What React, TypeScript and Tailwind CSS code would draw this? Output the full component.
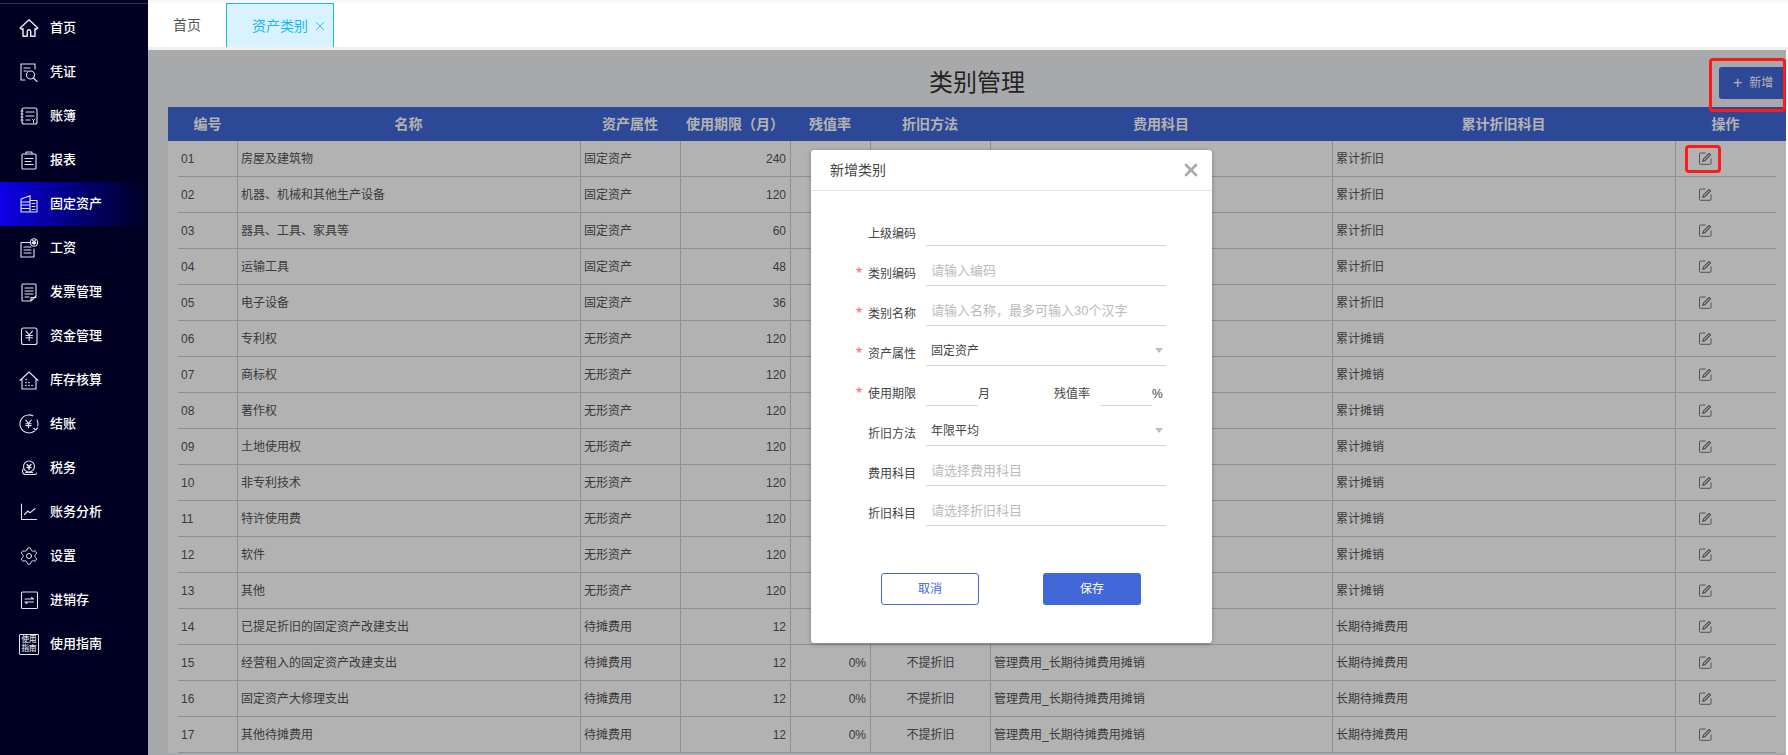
import React from "react";
import { Settings, X } from "lucide-react";

const S = (p: { children: React.ReactNode }) => (
  <svg width="20" height="20" viewBox="0 0 20 20" fill="none" stroke="#e4e4ee" strokeWidth="1.1" strokeLinecap="round" strokeLinejoin="round" className="shrink-0">
    {p.children}
  </svg>
);
const Yen = ({ x = 10, y = 10, s = 1 }: { x?: number; y?: number; s?: number }) => (
  <path d={`M${x - 3 * s} ${y - 4 * s}L${x} ${y - 0.5 * s}L${x + 3 * s} ${y - 4 * s}M${x} ${y - 0.5 * s}V${y + 4.5 * s}M${x - 3 * s} ${y}H${x + 3 * s}M${x - 3 * s} ${y + 2 * s}H${x + 3 * s}`} />
);

const icons: Record<string, React.ReactNode> = {
  首页: <S><path strokeWidth="1.5" d="M10 1.8L1.2 10l1.6 1.5 1.2-1V18.2h4.3v-4.7a1.7 1.7 0 0 1 3.4 0v4.7H16v-7.7l1.2 1 1.6-1.5z" /></S>,
  凭证: <S><path d="M16 7V2H2v16h4M5 6h6M5 9h3" /><circle cx="11.5" cy="13" r="4" /><path d="M14.5 16l3.5 3.5" /></S>,
  账簿: <S><rect x="3" y="2" width="15" height="16" rx="2" /><path d="M2 5h2M2 8h2M2 11h2M2 14h2M7 6h8M7 10h8M7 14h4" /><path strokeWidth="0.9" d="M13 13l1.5 1.5L16 13M14.5 14.5V17" /></S>,
  报表: <S><rect x="3" y="4" width="14" height="15" rx="1" /><path d="M7 4V2h6v2M6 8.5h8M6 11.5h6M6 14.5h8" /></S>,
  固定资产: <S><path d="M2 5l9-3.2V18H2zM11 6.5h7V18h-7M2 8h9M2 11h9M2 14.5h9M13 9.5h3M13 12.5h3M13 15.5h3" /></S>,
  工资: <S><path d="M11 4.5H2V19h13v-8M5 9h7M5 12h7M5 15h7" /><circle cx="15" cy="4.5" r="3.7" /><Yen x={15} y={4.2} s={0.6} /></S>,
  发票管理: <S><path d="M4 2h12a1 1 0 0 1 1 1v11l-5 5H4a1 1 0 0 1-1-1V3a1 1 0 0 1 1-1zM6 6h8M6 9h8M6 12h8M6 15h4M12 19v-3.5h5" /></S>,
  资金管理: <S><rect x="2.5" y="2" width="15.5" height="16.5" rx="2" /><Yen x={10.2} y={9.5} s={1.1} /></S>,
  库存核算: <S><path d="M1 10.5L10 2l9 8.5M3 9v10h14V9" /><path strokeWidth="1.6" d="M7 9.5h.1M7 12.5h.1M10 12.5h.1M7 15.5h.1M10 15.5h.1M13 15.5h.1" /></S>,
  结账: <S><path strokeDasharray="38 6" d="M15.5 17A9 9 0 1 1 18.7 12" /><Yen x={9.5} y={9.8} s={0.9} /><path d="M15 14.5l1.5 1.5 2-2" /></S>,
  税务: <S><circle cx="10" cy="8.5" r="5.5" /><path strokeWidth="1.4" d="M8 6.5l2 2 2-2M10 8.5v3M8 9.5h4" /><path d="M4 11c-1.5 3 .5 5.5 2.5 5.5H16c.8 0 1.5-.6 1.5-1.5M6.5 14.5h7" /></S>,
  账务分析: <S><path d="M2.5 2v15.5h15M5.5 12.5l3.5-3.5 2 1.8 5-4.3" /></S>,
  设置: <Settings size={20} strokeWidth={1.2} color="#e4e4ee" className="shrink-0" />,
  进销存: <S><rect x="2.5" y="2" width="16" height="16.5" rx="1" /><path d="M6 9h8.5l-2-1.5M14.5 12H6l2 1.5" /></S>,
};

const menu = ["首页", "凭证", "账簿", "报表", "固定资产", "工资", "发票管理", "资金管理", "库存核算", "结账", "税务", "账务分析", "设置", "进销存"];

type Row = [string, string, string, string, string, string, string, string];
const asset = (id: string, n: string, m: string): Row => [id, n, "固定资产", m, "", "", "", "累计折旧"];
const intan = (id: string, n: string): Row => [id, n, "无形资产", "120", "", "", "", "累计摊销"];
const defer = (id: string, n: string): Row => [id, n, "待摊费用", "12", "0%", "不提折旧", "管理费用_长期待摊费用摊销", "长期待摊费用"];
const rows: Row[] = [
  asset("01", "房屋及建筑物", "240"),
  asset("02", "机器、机械和其他生产设备", "120"),
  asset("03", "器具、工具、家具等", "60"),
  asset("04", "运输工具", "48"),
  asset("05", "电子设备", "36"),
  intan("06", "专利权"),
  intan("07", "商标权"),
  intan("08", "著作权"),
  intan("09", "土地使用权"),
  intan("10", "非专利技术"),
  intan("11", "特许使用费"),
  intan("12", "软件"),
  intan("13", "其他"),
  ["14", "已提足折旧的固定资产改建支出", "待摊费用", "12", "", "", "", "长期待摊费用"],
  defer("15", "经营租入的固定资产改建支出"),
  defer("16", "固定资产大修理支出"),
  defer("17", "其他待摊费用"),
];
const heads = ["编号", "名称", "资产属性", "使用期限（月）", "残值率", "折旧方法", "费用科目", "累计折旧科目", "操作"];

const EditIcon = () => (
  <svg width="13" height="13" viewBox="0 0 13 13" fill="none" stroke="#6a6a6a" strokeWidth="0.9">
    <path d="M12 6.5v4.8a1 1 0 0 1-1 1H1.5a1 1 0 0 1-1-1V2a1 1 0 0 1 1-1h5" />
    <path strokeWidth="1.1" d="M3.8 9.2l.5-2L10 1.5l1.5 1.5-5.7 5.7z" />
  </svg>
);

const Label = ({ text, req }: { text: string; req?: boolean }) => (
  <div className="w-[60px] mr-[10px] h-[25px] flex items-center justify-between text-xs text-[#444]">
    <span className="text-base leading-none text-[#f56c6c]">{req ? "*" : ""}</span>
    <span>{text}</span>
  </div>
);
const Field = ({ label, req, ph }: { label: string; req?: boolean; ph?: string }) => (
  <div className="flex items-end">
    <Label text={label} req={req} />
    <input placeholder={ph} className="w-[240px] h-[30px] pl-[5px] border-b border-[#d4d4d4] outline-none text-[13px] placeholder:text-[#bbb]" />
  </div>
);
const Select = ({ label, req, value }: { label: string; req?: boolean; value: string }) => (
  <div className="flex items-end">
    <Label text={label} req={req} />
    <div className="w-[240px] h-[30px] pl-[5px] pr-[3px] border-b border-[#d4d4d4] flex items-center justify-between text-xs text-[#444]">
      <span>{value}</span>
      <span className="w-0 h-0 border-x-[4px] border-x-transparent border-t-[5px] border-t-[#bdbdbd]" />
    </div>
  </div>
);

export default function App() {
  return (
    <div className="relative h-screen overflow-hidden flex bg-white [font-family:'Liberation_Sans','Noto_Sans_CJK_SC',sans-serif]">
      <aside className="w-[148px] shrink-0 bg-[#000022] pt-[3px]">
        <div className="border-t border-[#33334f] pt-[2px]">
          {menu.map((m) => (
            <div key={m} className={`h-[44px] pl-[19px] flex items-center gap-[11px] text-[13px] font-medium text-white ${m === "固定资产" ? "bg-gradient-to-r from-[#0d00e8] to-[#000022]" : ""}`}>
              {icons[m]}
              <span>{m}</span>
            </div>
          ))}
          <div className="h-[44px] pl-[19px] flex items-center gap-[11px] text-[13px] font-medium text-white">
            <div className="w-[20px] h-[21px] shrink-0 border border-[#e4e4ee] rounded-[1px] flex flex-col items-center justify-center text-[7.5px] leading-[9px] text-[#e4e4ee]">
              <span>使用</span>
              <span>指南</span>
            </div>
            <span>使用指南</span>
          </div>
        </div>
      </aside>

      <main className="flex-1 min-w-0 flex flex-col">
        <div className="h-[47px] shrink-0 pt-[3px] bg-white flex items-stretch shadow-[inset_0_3px_0_#f8f9fb] text-sm">
          <div className="w-[78px] flex items-center justify-center text-[#555]">首页</div>
          <div className="w-[108px] pl-[25px] bg-[#d9f2ff] border border-b-0 border-[#1ab3e8] text-[#1ab5ec] flex items-center gap-[5px]">
            <span>资产类别</span>
            <X size={14} strokeWidth={1.5} />
          </div>
        </div>
        <div className="h-[3px] shrink-0 bg-[#f0f0f0]" />

        <div className="relative flex-1 min-h-0 mr-[2px] bg-[#f1f2f5] pl-[20px] overflow-hidden">
          <div className="h-[57px] grid grid-cols-[1fr_auto_1fr] items-start pt-[17px]">
            <div />
            <h1 className="h-[32px] flex items-center text-2xl leading-none text-[#333]">类别管理</h1>
            <button className="justify-self-end w-[67px] h-[32px] pl-[14px] bg-[#4167d8] rounded-l-[3px] text-white text-xs flex items-center gap-[7px]">
              <span className="text-base leading-none font-light">+</span>
              <span>新增</span>
            </button>
          </div>
          <div className="h-[34px] bg-[#4167d8] px-[10px] grid grid-cols-[59px_343px_100px_110px_80px_120px_342px_343px_101px] text-sm font-bold text-white">
            {heads.map((h) => (
              <div key={h} className="flex items-center justify-center whitespace-nowrap">{h}</div>
            ))}
          </div>
          <div className="bg-white px-[10px] text-xs text-[#555]">
            {rows.map((r) => (
              <div key={r[0]} className="h-[36px] border-b border-[#cfcfcf] grid grid-cols-[59px_343px_100px_110px_80px_120px_342px_343px_101px]">
                <div className="flex items-center pl-[3px]">{r[0]}</div>
                <div className="flex items-center pl-[3px] border-l border-[#cfcfcf]">{r[1]}</div>
                <div className="flex items-center pl-[3px] border-l border-[#cfcfcf]">{r[2]}</div>
                <div className="flex items-center justify-end pr-[4px] border-l border-[#cfcfcf]">{r[3]}</div>
                <div className="flex items-center justify-end pr-[4px] border-l border-[#cfcfcf]">{r[4]}</div>
                <div className="flex items-center justify-center border-l border-[#cfcfcf]">{r[5]}</div>
                <div className="flex items-center pl-[3px] border-l border-[#cfcfcf]">{r[6]}</div>
                <div className="flex items-center pl-[3px] border-l border-[#cfcfcf]">{r[7]}</div>
                <div className="flex items-center pl-[23px] border-l border-[#cfcfcf]"><EditIcon /></div>
              </div>
            ))}
          </div>

          <div className="absolute inset-0 bg-black/30" />

          <div className="absolute left-[663px] top-[100px] w-[401px] h-[493px] bg-white rounded-[3px] shadow-[0_1px_4px_rgba(0,0,0,0.3)]">
            <div className="h-[41px] pl-[19px] pr-[11px] border-b border-[#e5e5e5] flex items-center justify-between">
              <span className="text-sm text-[#444]">新增类别</span>
              <X size={20} strokeWidth={3.2} color="#aaaaaa" />
            </div>
            <div className="pt-[25px] pl-[45px] flex flex-col gap-[10px]">
              <Field label="上级编码" />
              <Field label="类别编码" req ph="请输入编码" />
              <Field label="类别名称" req ph="请输入名称，最多可输入30个汉字" />
              <Select label="资产属性" req value="固定资产" />
              <div className="flex items-end">
                <Label text="使用期限" req />
                <div className="w-[52px] h-[30px] border-b border-[#d4d4d4]" />
                <div className="w-[76px] h-[25px] flex items-center text-xs text-[#444]">月</div>
                <div className="w-[36px] mr-[10px] h-[25px] flex items-center text-xs text-[#444] whitespace-nowrap">残值率</div>
                <div className="w-[52px] h-[30px] border-b border-[#d4d4d4]" />
                <div className="h-[25px] flex items-center text-xs text-[#444]">%</div>
              </div>
              <Select label="折旧方法" value="年限平均" />
              <Field label="费用科目" ph="请选择费用科目" />
              <Field label="折旧科目" ph="请选择折旧科目" />
            </div>
            <div className="mt-[47px] pl-[70px] flex gap-[64px]">
              <button className="w-[98px] h-[32px] rounded-[3px] border border-[#4267d8] text-[#4267d8] text-xs">取消</button>
              <button className="w-[98px] h-[32px] rounded-[3px] bg-[#4267d8] text-white text-xs">保存</button>
            </div>
          </div>
        </div>
      </main>

      <div className="absolute left-[1709px] top-[58px] w-[77px] h-[54px] border-[3px] border-[#ff1a1a] rounded-[4px]" />
      <div className="absolute left-[1685px] top-[145px] w-[36px] h-[28px] border-[3px] border-[#ff1a1a] rounded-[4px]" />
    </div>
  );
}
